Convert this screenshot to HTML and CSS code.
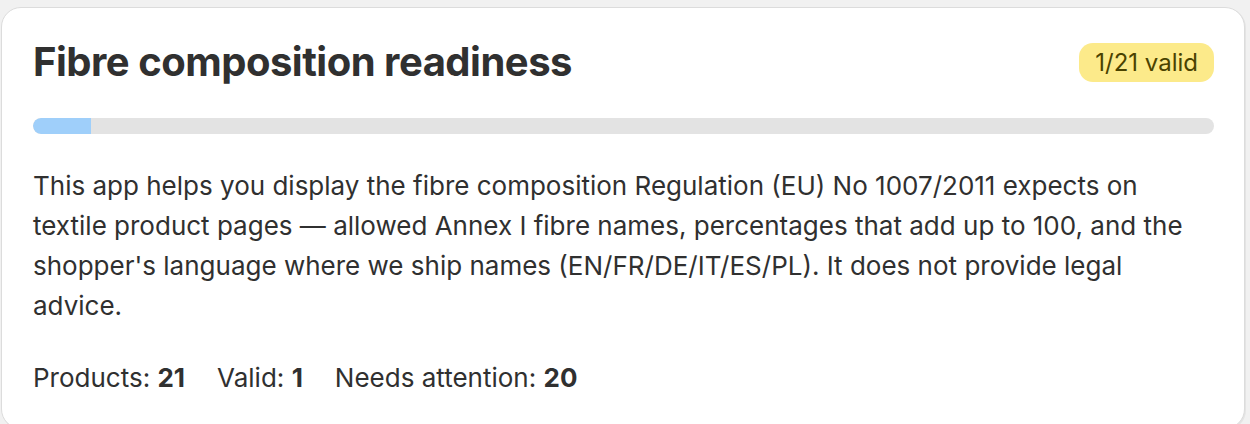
FILE: index.html
```html
<!DOCTYPE html>
<html>
<head>
<meta charset="utf-8">
<link rel="stylesheet" href="styles.css">
</head>
<body>
<div class="card">
  <div class="head">
    <h1 class="title">Fibre composition readiness</h1>
    <span class="badge">1/21 valid</span>
  </div>
  <div class="bar"><div class="fill" style="width:4.9%"></div></div>
  <p class="desc">This app helps you display the fibre composition Regulation (EU) No 1007/2011 expects on textile product pages — allowed Annex I fibre names, percentages that add up to 100, and the shopper's language where we ship names (EN/FR/DE/IT/ES/PL). It does not provide legal advice.</p>
  <div class="stats">
    <span>Products: <b>21</b></span>
    <span>Valid: <b>1</b></span>
    <span>Needs attention: <b>20</b></span>
  </div>
</div>
</body>
</html>
```
FILE: styles.css
```css
html, body { margin: 0; padding: 0; }
html { overflow: hidden; }
body {
  background: #f1f1f1;
  font-family: Inter, "Noto Sans", sans-serif;
  color: #303030;
  padding: 7px 0 0 1px;
  height: 424px;
  box-sizing: border-box;
  overflow: hidden;
}
.card {
  width: 1244px;
  box-sizing: border-box;
  height: 422px;
  background: #fff;
  border-radius: 20px;
  border: 1px solid #dcdcdc;
  box-shadow: 1px 1px 0 #e4e4e4;
  padding: 30px 30px 30px 31px;
}
.head {
  display: flex;
  align-items: center;
  justify-content: space-between;
}
.title {
  margin: 0;
  font-size: 40px;
  font-weight: 700;
  line-height: 48px;
  letter-spacing: -0.5px;
}
.badge {
  background: #fcea8a;
  color: #4a4200;
  font-size: 24px;
  line-height: 39px;
  padding: 0 16px;
  border-radius: 14px;
}
.bar {
  margin-top: 32px;
  height: 16px;
  background: #e3e3e3;
  border-radius: 8px;
  overflow: hidden;
}
.fill {
  height: 100%;
  background: #9fcffa;
  border-radius: 8px 0 0 8px;
}
.desc {
  margin: 32px 0 0;
  font-size: 26px;
  line-height: 40px;
}
.stats {
  margin-top: 36px;
  display: flex;
  gap: 32px;
  font-size: 26px;
  line-height: 32px;
}
.stats b { font-weight: 700; }
```
